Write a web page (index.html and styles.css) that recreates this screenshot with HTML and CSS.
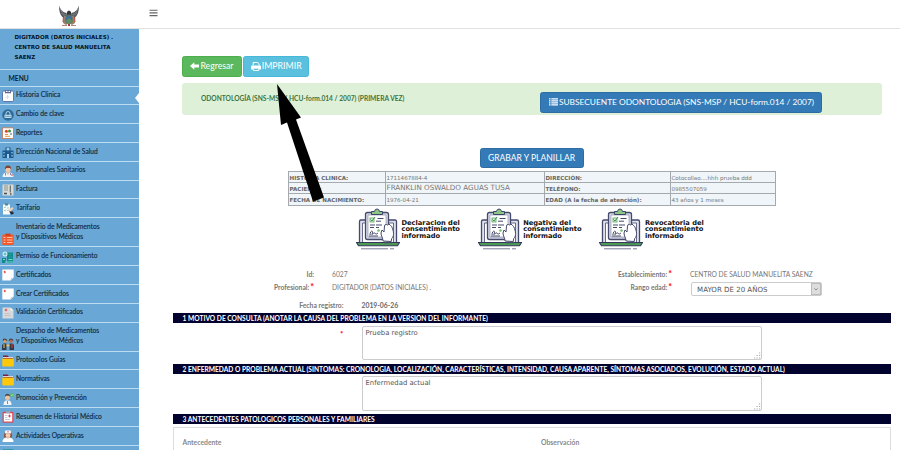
FILE: index.html
```html
<!DOCTYPE html>
<html lang="es">
<head>
<meta charset="utf-8">
<title>Historia Clínica</title>
<link rel="stylesheet" href="styles.css">
</head>
<body>
<svg width="0" height="0" class="defs" aria-hidden="true">
  <symbol id="consent" viewBox="0 0 44 42">
    <path d="M3.5 34V13.5q0-1.5 1.500-1.500h34q1.500 0 1.500 1.500V34" fill="#dfe1ec" stroke="#454a6d" stroke-width="1.300"/>
    <path d="M6.500 34V15h31v19" fill="#fff" stroke="#454a6d" stroke-width=".8"/>
    <path d="M.5 34.500h43l-2 3.300h-39z" fill="#4d9a55" stroke="#34395b" stroke-width="1.100"/>
    <path d="M5 40.800h27M34 40.800h4" stroke="#555a7a" stroke-width=".8"/>
    <rect x="9.500" y="4.500" width="23" height="27" rx="2" fill="#d5d8e5" stroke="#454a6d" stroke-width="1.300"/>
    <path d="M12 7h18v22H12z" fill="#fff" stroke="#6b6f8c" stroke-width=".5"/>
    <path d="M15.500 6.500v-3h3q.3-2.500 2.500-2.500t2.500 2.500h3v3z" fill="#8cc684" stroke="#3d4468" stroke-width="1"/>
    <rect x="14" y="10" width="4" height="4" fill="#dff0db" stroke="#58a35d" stroke-width=".8"/>
    <path d="m14.500 11.500 1.500 1.500 3-4" fill="none" stroke="#3c914c" stroke-width="1"/>
    <path d="M21.500 10.500h6M20 13.200h5M14 17h5m1 0h6M14 19.500h4m2 0h3" stroke="#454a6d" stroke-width="1"/>
    <path d="M14 27c0-5 4-5 2-1-1 2 2-2 3-1s0 2 3 0M13 28h9" fill="none" stroke="#34395b" stroke-width=".9"/>
    <circle cx="22.500" cy="22.500" r="1.300" fill="#78bb70"/>
    <path d="M27 33c0-3-2-5-2-8l1-3 2 2 .5-6q.2-2 2-1.500l1 .5 1.500-1 1.500 1.500 1.200 1c2 5 3 9 0 12l-.5 3z" fill="#fff" stroke="#454a6d" stroke-width="1"/>
    <path d="M28 34.500h8" stroke="#454a6d" stroke-width="1.500"/>
  </symbol>
  <symbol id="folder" viewBox="0 0 12 12"><path d="M1 .5h4.500L7 2h3.500v3H1z" fill="#7b1d3c"/><path d="M1 2.500h10" stroke="#fff" stroke-width=".8"/><path d="M.3 3.500h9l2 .2q.5 0 .5.600V10.600q0 .8-.8.8H1q-.7 0-.7-.8z" fill="#ffc80a"/></symbol>
  <symbol id="note" viewBox="0 0 12 12"><path d="M.3.500h11.400v8L8.500 11.500H.3z" fill="#fff"/><path d="M11.700 8.500 8.500 11.500l.3-2.600z" fill="#ccd3dd"/><path d="M2.500 1.500 4 3 3 4.500 1.500 3z" fill="#ed4a32"/></symbol>
</svg>
<header class="topbar">
  <div class="brand">
    <svg width="22" height="23" viewBox="0 0 22 23">
      <path d="M8.500 9C4 8 2 5 1 1.500 1 7 2 12 6.500 14.500L9 13zM13.500 9C18 8 20 5 21 1.500 21 7 20 12 15.500 14.500L13 13z" fill="#55565c"/>
      <path d="M2 4c1 4 3 6 6 7M3 9l5 4M20 4c-1 4-3 6-6 7m5-2-5 4" fill="none" stroke="#8e9095" stroke-width=".6"/>
      <path d="M9 8q2-3 4 0l.5 4h-5z" fill="#34353b"/>
      <path d="m6 12-1 7 3 2 3-2 3 2 3-2-1-7" fill="#97806b"/>
      <ellipse cx="11" cy="15.300" rx="3.600" ry="4.300" fill="#3d6e9f" stroke="#6b7b51" stroke-width=".8"/>
      <path d="M8 16.500 11 14l3 2.500-2 3h-2z" fill="#63905a"/>
      <path d="m5.500 13-.5 5M16.500 13l.5 5" stroke="#c33b3d" stroke-width="1"/>
      <path d="M4 21.500h5M13 21.500h5" stroke="#b78376" stroke-width="1.200"/>
      <path d="M10 20h2v2h-2z" fill="#a83d3f"/>
    </svg>
  </div>
  <svg class="burger" width="9" height="8" viewBox="0 0 9 8"><path d="M.5 1.200h8M.5 3.900h8M.5 6.600h8" stroke="#666" stroke-width="1.100"/></svg>
</header>
<div class="shell">
  <nav class="side">
    <div class="user">DIGITADOR (DATOS INICIALES) .<br>CENTRO DE SALUD MANUELITA<br>SAENZ</div>
    <div class="menu">MENU</div>
    <a class="item active"><svg viewBox="0 0 12 12"><rect x=".5" y="1" width="11" height="10.500" rx="1.200" fill="#fff" stroke="#4b5c9d" stroke-width=".8"/><path d="M3 .3h6v3H3z" fill="#5d6b9f"/><path d="M4 1.500h1.500M6.500 1.500H8" stroke="#fff"/><path d="M3.500 7h4M5.500 5v4" stroke="#d7dce9" stroke-width="1"/></svg><span>Historia Clinica</span></a>
    <a class="item"><svg viewBox="0 0 12 12"><circle cx="6" cy="6" r="5.800" fill="#2c6c9c"/><path d="M4 6V4.500a2 2 0 0 1 4 0V6" fill="none" stroke="#c7dce9" stroke-width=".9"/><rect x="2.500" y="5.800" width="7" height="3.200" fill="#bed9e8"/><path d="M3.500 7.400h5" stroke="#356e99" stroke-width="1" stroke-dasharray="1"/></svg><span>Cambio de clave</span></a>
    <a class="item"><svg viewBox="0 0 12 12"><rect x=".5" y=".8" width="11" height="10.700" fill="#fffdfa" stroke="#c18063" stroke-width=".9"/><circle cx="4.400" cy="4.300" r="1.500" fill="#e53e2e"/><circle cx="7.500" cy="4" r="1.500" fill="#4a8f3c"/><path d="M3 7.500h3M3 9.300h5" stroke="#e79a46"/><path d="M8 7h2" stroke="#386caa"/></svg><span>Reportes</span></a>
    <a class="item"><svg viewBox="0 0 12 12"><path d="M.5 4.500h3V1.500h5v3h3V12H.5z" fill="#195b91"/><circle cx="6" cy="3" r="2.300" fill="#316fa1"/><path d="M6 1.500v3M4.500 3h3M2 6v1.500M2 9v1.500M10 6v1.500M10 9v1.500" stroke="#c7e3f5"/><path d="M5 8h2v4H5z" fill="#a8d0ec"/></svg><span>Dirección Nacional de Salud</span></a>
    <a class="item"><svg viewBox="0 0 12 12"><path d="M.5 12q0-4 3.500-4.500h4q3.500.5 3.500 4.500z" fill="#eef1f8"/><path d="M4.500 7.500h3L6 10z" fill="#edb28e"/><circle cx="6" cy="4.500" r="2.700" fill="#f3c4a3"/><path d="M3 4.500Q2.500.5 6 .5t3 4L8 3H4.500z" fill="#814537"/><path d="M3.500 8v2.500M8.500 8v2" stroke="#53638d" stroke-width=".7"/><path d="M9 10h2" stroke="#dd4441"/></svg><span>Profesionales Sanitarios</span></a>
    <a class="item"><svg viewBox="0 0 12 12"><path d="M.5.500h11v11H.5z" fill="#d9dad4"/><path d="M2 2h4M2 4h4M2 6h4" stroke="#898c89" stroke-width=".9"/><path d="M8.300 1.500v7" stroke="#666b6a" stroke-width="1.200"/><path d="M2 9.500h3M8 10h1.500" stroke="#474d50" stroke-width="1.300"/></svg><span>Factura</span></a>
    <a class="item"><svg viewBox="0 0 12 12"><path d="M1 1.500h7v10H1z" fill="#fafbf8"/><path d="M3 .5h3v2H3z" fill="#4a8791"/><path d="m2 4 1 1 1-1.500M2 7l1 1 1-1.500M5 5h2M5 7.500h2" fill="none" stroke="#79aaa3" stroke-width=".6"/><path d="m6 7 4.500-3 1 1.500L8 9z" fill="#f3cfb6"/><path d="m7 8.500 4 0 .8 2-2.300 1.300z" fill="#272a35"/></svg><span>Tarifario</span></a>
    <a class="item tall"><svg viewBox="0 0 12 12"><rect x=".3" y="1.500" width="11.400" height="10.500" rx="1" fill="#f45a2b"/><path d="M3.500.500h5V3h-5z" fill="#cf421f"/><path d="M1.500 4.500h2M5 4.500h5.500M1.500 7h2M5 7h5.500M1.500 9.500h2M5 9.500h5.500" stroke="#ffd7bd" stroke-width=".8"/></svg><span>Inventario de Medicamentos<br>y Dispositivos Médicos</span></a>
    <a class="item"><svg viewBox="0 0 12 12"><path d="M0 7h4v5H0zM5 1.500h6V12H5z" fill="#128b8a"/><circle cx="3" cy="3" r="2.500" fill="#d4eff2"/><path d="M3 1.500v3M1.500 3h3M7 3.500h2.500M6.500 6H10" stroke="#2eaaac" stroke-width=".8"/><path d="M1 8.500h2M6.500 8.500h4M3 11h8" stroke="#74dbc9" stroke-width="1"/></svg><span>Permiso de Funcionamiento</span></a>
    <a class="item"><svg><use href="#note"/></svg><span>Certificados</span></a>
    <a class="item"><svg><use href="#note"/></svg><span>Crear Certificados</span></a>
    <a class="item"><svg viewBox="0 0 12 12"><path d="M.5.500h8l3 3v8H.5z" fill="#d7d8da"/><path d="M8.500.500v3h3z" fill="#f4f4f4"/><path d="M4 1.500 5.500 3 4 4.500 2.500 3z" fill="#de5c59"/><path d="M2.500 6.500h5M2.500 8.500h6" stroke="#bababf" stroke-width=".7"/></svg><span>Validación Certificados</span></a>
    <a class="item tall"><svg viewBox="0 0 12 12"><path d="M0 12V7l1.500-1.500h3V12zM7.500 12V5.500h3L12 7v5z" fill="#333947"/><circle cx="3" cy="3" r="1.800" fill="#d99c51"/><circle cx="9" cy="3" r="1.800" fill="#bd6b48"/><path d="M1 2.500Q2-.5 5 2.500M7 2.500q2-3 4 0" fill="none" stroke="#432b2b" stroke-width="1.100"/><path d="M4.500 7.500h3" stroke="#e7ba64" stroke-width="2"/><path d="M2 6v4" stroke="#eac563" stroke-width="1"/><path d="M10 6v4" stroke="#b83335" stroke-width="1.500"/></svg><span>Despacho de Medicamentos<br>y Dispositivos Médicos</span></a>
    <a class="item"><svg><use href="#folder"/></svg><span>Protocolos Guías</span></a>
    <a class="item"><svg><use href="#folder"/></svg><span>Normativas</span></a>
    <a class="item"><svg viewBox="0 0 12 12"><path d="M1.500 12q0-4 2.500-4.500h3q2.500.5 2.500 4.500z" fill="#f0f4f7"/><circle cx="5.500" cy="4.500" r="2.500" fill="#f0c49f"/><path d="M2.800 4Q3 .8 5.500.8T8.200 4L7 2.800H4z" fill="#4d4d50"/><path d="M5.500 8v3" stroke="#4390bb" stroke-width=".9"/><circle cx="10" cy="2" r="1.900" fill="#62b95a"/><path d="m9 2 .8.8 1.200-1.500" fill="none" stroke="#fff" stroke-width=".5"/></svg><span>Promoción y Prevención</span></a>
    <a class="item"><svg viewBox="0 0 12 12"><rect x=".5" y=".8" width="11" height="10.900" rx="1" fill="#da4c59"/><path d="M1.800 2.300h8.400v8.200H1.800z" fill="#fff"/><path d="M4 .3h4v2H4z" fill="#9ba9bb"/><path d="M3 4.500h2.500M3 6.500h2.500M3 8.500h5" stroke="#a5b7c7" stroke-width=".7"/><path d="M7.500 3.500v3M6 5h3" stroke="#dd4453" stroke-width=".9"/></svg><span>Resumen de Historial Médico</span></a>
    <a class="item"><svg viewBox="0 0 12 12"><path d="M2 7.500Q1.500 1 6 1t4 6.500z" fill="#8e5143"/><path d="M.5 12q0-4 4-4.500h3q4 .5 4 4.500z" fill="#fff"/><circle cx="6" cy="5.300" r="2.400" fill="#f4cbb0"/><path d="m3 3.500.3-3h5.400l.3 3q-3-1-6 0z" fill="#fff"/><path d="M6 1v1.600M5.200 1.800h1.600" stroke="#de5451" stroke-width=".6"/><path d="M4.500 7.500 6 9l1.500-1.500z" fill="#eeb491"/></svg><span>Actividades Operativas</span></a>
    <a class="item"><svg viewBox="0 0 12 12"><rect x="1" y=".3" width="10.500" height="11" fill="#16938e"/><path d="M3 1.500h6" stroke="#9ce0d3"/></svg></a>
  </nav>
  <main class="main">
    <div class="actions">
      <button class="btn green"><svg width="9" height="8" viewBox="0 0 9 8"><path d="M4.300.3v2.200H9v3H4.300v2.200L0 4z" fill="#fff"/></svg>Regresar</button>
      <button class="btn cyan"><svg width="10" height="9" viewBox="0 0 10 9"><path d="M2.200 3.500V.5h4.500L8 1.700v1.800" fill="none" stroke="#fff"/><path d="M0 7.500V4.500q0-1 1-1h8q1 0 1 1v3H8V6H2v1.500z" fill="#fff"/><path d="M2.400 6.300h5.200v2.200H2.400z" fill="none" stroke="#fff" stroke-width=".9"/></svg>IMPRIMIR</button>
    </div>
    <div class="alert">
      <span class="formname">ODONTOLOGÍA (SNS-MSP / HCU-form.014 / 2007) (PRIMERA VEZ)</span>
      <button class="btn blue subs"><svg width="9" height="8" viewBox="0 0 9 8"><path d="M0 .9h1.500M2.300.9H9M0 2.900h1.500M2.300 2.900H9M0 4.900h1.500M2.300 4.900H9M0 6.900h1.500M2.300 6.900H9" stroke="#fff" stroke-width="1.400"/></svg>SUBSECUENTE ODONTOLOGIA (SNS-MSP / HCU-form.014 / 2007)</button>
    </div>
    <div class="save"><button class="btn blue">GRABAR Y PLANILLAR</button></div>
    <div class="patient">
      <b>HISTORIA CLINICA:</b><span>1711467884-4</span><b>DIRECCIÓN:</b><span>Cotocollao....hhh prueba ddd</span>
      <b>PACIENTE:</b><span class="name">FRANKLIN OSWALDO AGUAS TUSA</span><b>TELÉFONO:</b><span>0985507059</span>
      <b>FECHA DE NACIMIENTO:</b><span>1976-04-21</span><b>EDAD (A la fecha de atención):</b><span>43 años y 1 meses</span>
    </div>
    <div class="consents">
      <a><svg><use href="#consent"/></svg><span>Declaracion del<br>consentimiento<br>informado</span></a>
      <a><svg><use href="#consent"/></svg><span>Negativa del<br>consentimiento<br>informado</span></a>
      <a><svg><use href="#consent"/></svg><span>Revocatoria del<br>consentimiento<br>informado</span></a>
    </div>
    <div class="info">
      <label>Id:</label><span>6027</span><label>Establecimiento:<i>*</i></label><span>CENTRO DE SALUD MANUELITA SAENZ</span>
      <label>Profesional:<i>*</i></label><span>DIGITADOR (DATOS INICIALES) .</span><label>Rango edad:<i>*</i></label>
      <div class="select"><span>MAYOR DE 20 AÑOS</span><svg width="10" height="13" viewBox="0 0 10 13"><path d="m3 5.500 2 2 2-2" fill="none" stroke="#555" stroke-width=".8"/></svg></div>
    </div>
    <div class="date"><label>Fecha registro:</label><b>2019-06-26</b></div>
    <h2>1 MOTIVO DE CONSULTA (ANOTAR LA CAUSA DEL PROBLEMA EN LA VERSION DEL INFORMANTE)</h2>
    <div class="field"><i>*</i><div class="area">Prueba registro<svg width="7" height="7" viewBox="0 0 7 7"><path d="M0 6h1.200M2.500 6h1.200M5 6h1.200M2.500 3.500h1.200M5 3.500h1.200M5 1h1.200" stroke="#aaa" stroke-width="1.200"/></svg></div></div>
    <h2>2 ENFERMEDAD O PROBLEMA ACTUAL (SINTOMAS: CRONOLOGIA, LOCALIZACIÓN, CARACTERÍSTICAS, INTENSIDAD, CAUSA APARENTE, SÍNTOMAS ASOCIADOS, EVOLUCIÓN, ESTADO ACTUAL)</h2>
    <div class="field"><i></i><div class="area">Enfermedad actual<svg width="7" height="7" viewBox="0 0 7 7"><path d="M0 6h1.200M2.500 6h1.200M5 6h1.200M2.500 3.500h1.200M5 3.500h1.200M5 1h1.200" stroke="#aaa" stroke-width="1.200"/></svg></div></div>
    <h2>3 ANTECEDENTES PATOLOGICOS PERSONALES Y FAMILIARES</h2>
    <div class="history"><span>Antecedente</span><span>Observación</span></div>
  </main>
</div>
<svg class="pointer" width="54" height="120" viewBox="0 0 54 120"><path d="M3 0 27 33.500 22 35.500 50 113.500 39 117.500 13 38.500 7 41z" fill="#000"/></svg>
</body>
</html>
```
FILE: styles.css
```css
* { box-sizing: border-box; }
body { margin: 0; width: 900px; height: 450px; overflow: hidden; background: #fff; font-family: Lato, sans-serif; font-size: 6.7px; color: #777; position: relative; }
.defs { position: absolute; }
svg { display: block; flex: none; }
i { font-style: normal; color: #f00; }

.topbar { height: 29px; border-bottom: 1px solid #e1e1e1; display: flex; align-items: flex-start; }
.brand { width: 139px; padding: 4px 0 0 58px; }
.burger { margin: 9px 0 0 10px; }

.shell { display: flex; height: 421px; }
.side { width: 139px; background: #69a8d6; color: #10273a; flex: none; overflow: hidden; }
.user { height: 40.500px; padding: 3px 0 0 14.500px; font: bold 5.540px/10.200px "DejaVu Sans", sans-serif; color: #06141f; border-bottom: 1px solid #bcdcf2; }
.menu { height: 17px; padding-left: 8.500px; font-size: 6.700px; font-weight: 700; line-height: 16px; color: #0b1d2c; border-bottom: 1px solid #bcdcf2; }
.item { display: flex; align-items: flex-end; height: 18.830px; padding: 0 0 2.500px 2px; gap: 2px; border-bottom: 1px solid #bcdcf2; position: relative; }
.item svg { width: 12px; height: 12px; }
.item span { line-height: 10.200px; align-self: flex-start; padding-top: 2.600px; white-space: nowrap; -webkit-text-stroke: .12px #10273a; }
.item.tall { height: 29px; padding-bottom: 1px; }
.active::after { content: ""; position: absolute; right: 0; top: 6px; border: 5px solid transparent; border-right: 4px solid #fff; border-left: 0; }

.main { flex: 1; min-width: 0; padding: 27px 9px 0 34px; display: flex; flex-direction: column; }
.main > * { flex: none; }
.actions { display: flex; gap: 1.500px; margin-left: 9.200px; }
.btn { display: flex; align-items: center; justify-content: center; height: 20.500px; border: 1px solid; border-radius: 2.500px; color: #fff; font: 8.500px/12px Lato, sans-serif; padding: 0 7px; gap: 1px; white-space: nowrap; }
.green { width: 59.500px; background: #5cb85c; border-color: #4cae4c; font-size: 8.670px; }
.cyan { width: 66px; background: #5bc0de; border-color: #46b8da; font-size: 8.790px; }
.blue { background: #337ab7; border-color: #2e6da4; }
.alert { margin: 6px 9px 0 9.200px; height: 32.500px; border-radius: 3px; background: #dff0d8; display: flex; padding-left: 18.800px; }
.formname { width: 339.500px; flex: none; padding-top: 11px; font-size: 6.620px; line-height: 9px; font-weight: 700; color: #3c763d; }
.subs { margin-top: 9.500px; width: 282px; flex: none; font-size: 8.370px; }
.save { margin: 32.500px 0 0 306.500px; display: flex; }
.save .btn { width: 104px; font-size: 8.560px; }

.patient { margin: 2.700px 0 0 115px; width: 488px; display: grid; grid-template-columns: 97px 159px 126px 105px; grid-template-rows: 11.200px 11.200px 12px; border: solid #a3a9ac; border-width: 1px 0 0 1px; background: #eff5f8; font: 5.560px/10px "DejaVu Sans", sans-serif; color: #777; }
.patient > * { border: solid #a3a9ac; border-width: 0 1px 1px 0; padding: 1px 0 0 .5px; white-space: nowrap; }
.patient b { color: #666; }
.patient .name { font-size: 7.180px; padding-top: .5px; }
.consents { display: flex; margin: 1.500px 0 0 183px; height: 42px; }
.consents a { display: flex; gap: 1.500px; width: 121.700px; }
.consents svg { width: 44px; height: 42px; }
.consents span { padding-top: 12px; font: bold 6.700px/6.900px "DejaVu Sans", sans-serif; color: #111; }

.info { margin-top: 19px; display: grid; grid-template-columns: 141px 168px 154px 1fr; column-gap: 18px; grid-template-rows: 13.500px 15px; line-height: 10px; font-size: 6.700px; }
.info label { text-align: right; font-weight: 700; color: #777; }
.info i { font-size: 9px; margin-left: 1px; line-height: 6px; }
.select { display: flex; justify-content: space-between; width: 131px; height: 14.500px; margin: -.5px 0 0 .6px; border: 1px solid #ccc; border-radius: 2px; font: 7.060px/14px "DejaVu Sans", sans-serif; padding-left: 5.500px; color: #555; }
.select svg { background: #ddd; border: 1px solid #bbb; height: 12.500px; }
.date { display: flex; gap: 18px; height: 16px; padding-top: 2.500px; line-height: 10px; font-size: 6.800px; color: #666; }
.date label { width: 170.500px; text-align: right; font-weight: 700; color: #777; }

h2 { margin: 0; height: 10.300px; background: #02022f; color: #fff; font-size: 6.655px; line-height: 10px; padding-left: 9.500px; white-space: nowrap; }
.field { display: flex; height: 40.200px; padding-top: 2.500px; }
.field > i { width: 188.500px; padding: 3px 18px 0 0; text-align: right; font-size: 8px; font-weight: 700; }
.area { position: relative; width: 400px; height: 34.300px; border: 1px solid #ccc; border-radius: 2px; padding: 2px 3px; font: 6.850px/9px "DejaVu Sans", sans-serif; color: #555; }
.area svg { position: absolute; right: 0; bottom: 0; }
.history { margin-top: 3px; height: 40px; border: 1px solid #ddd; padding: 9px 0 0 8.500px; display: flex; font-size: 6.820px; line-height: 10px; font-weight: 700; color: #888; }
.history span { width: 358.500px; flex: none; }
.history span:last-child { width: auto; }
.pointer { position: absolute; left: 274px; top: 84px; }
```
